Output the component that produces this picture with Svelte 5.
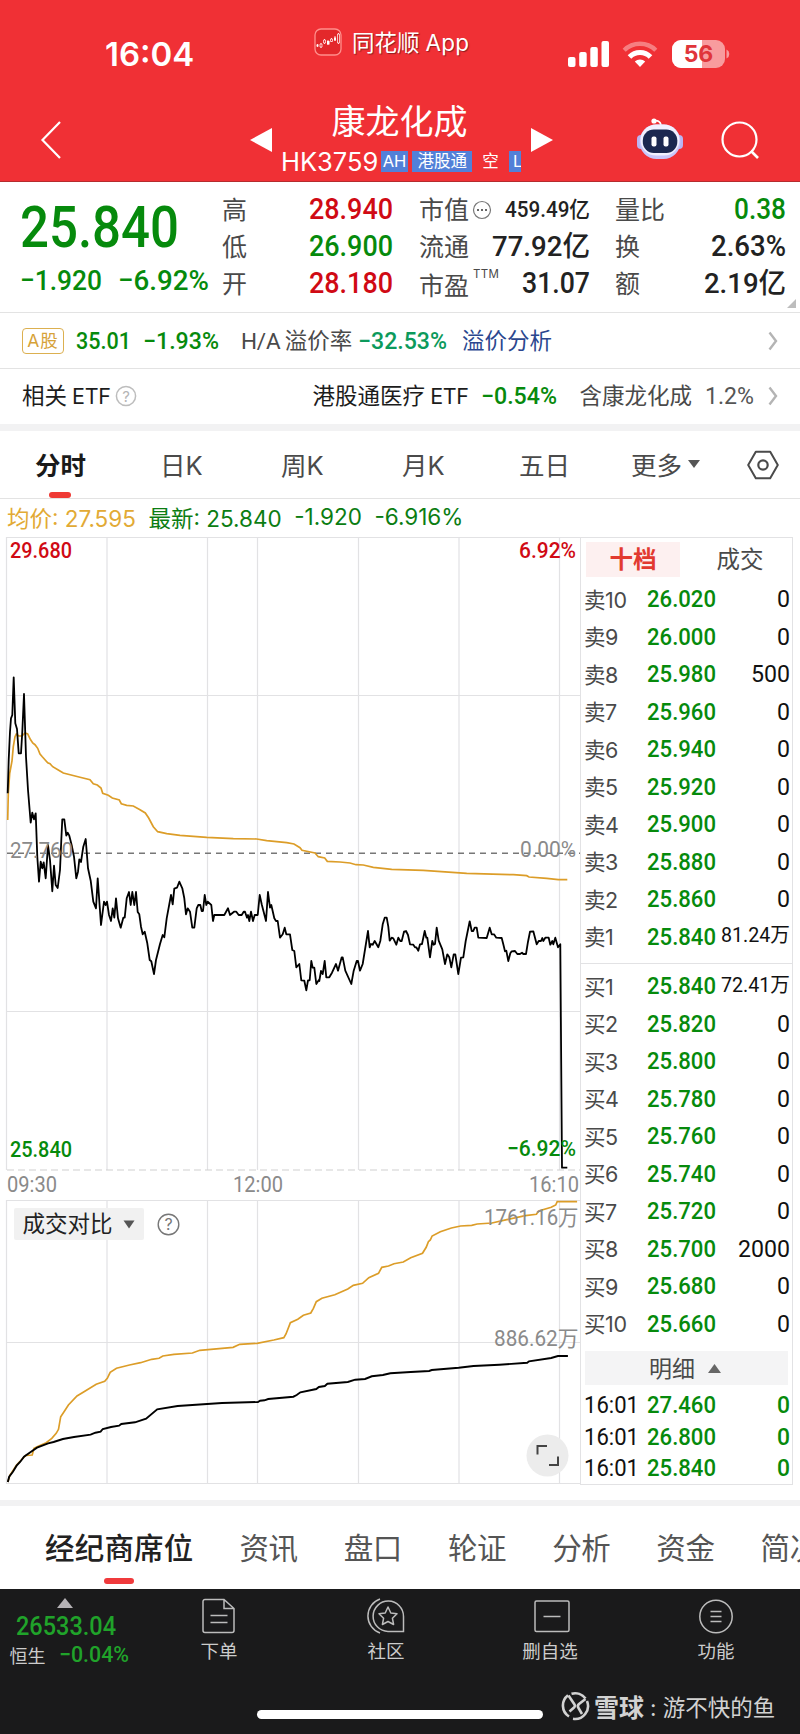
<script lang="ts">
  interface Level {
    label: string;
    price: string;
    qty: string;
  }

  const sellPrices = ['26.020', '26.000', '25.980', '25.960', '25.940', '25.920', '25.900', '25.880', '25.860', '25.840'];
  const buyPrices = ['25.840', '25.820', '25.800', '25.780', '25.760', '25.740', '25.720', '25.700', '25.680', '25.660'];
  const sellQty: Record<number, string> = { 8: '500', 1: '81.24万' };
  const buyQty: Record<number, string> = { 1: '72.41万', 8: '2000' };

  const sells: Level[] = sellPrices.map((price, i) => ({
    label: `卖${10 - i}`,
    price,
    qty: sellQty[10 - i] ?? '0',
  }));
  const buys: Level[] = buyPrices.map((price, i) => ({
    label: `买${i + 1}`,
    price,
    qty: buyQty[i + 1] ?? '0',
  }));

  const trades = ['27.460', '26.800', '25.840'];
  const pages = ['资讯', '盘口', '轮证', '分析', '资金', '简况'];
  const gridX = [107, 207.5, 257.5, 358.5, 459, 559.5];

  // 采样点 -> 折线坐标
  function line(raw: string, ox: number, oy: number, sx: number, sy: number) {
    return raw
      .trim()
      .split(/\s+/)
      .map((p) => {
        const [x, y] = p.split(',').map(Number);
        return `${(ox + x / sx).toFixed(1)},${(oy + y / sy).toFixed(1)}`;
      })
      .join(' ');
  }

  const price =
    line(
      `23,400 26,300 30,215 33,175 37,165 41,52 46,190 51,207 56,280 63,280 67,215 72,102 78,290 84,390 92,488 97,458
      102,478 107,460 112,590 117,665 122,605 127,625 131,607 137,655 144,555 150,600 157,694 162,617 167,675 173,684
      180,630 184,540 187,478 193,478 199,527 203,518 208,527 215,556 222,590 229,655 234,635 238,598 243,606 250,560
      257,537 264,625 272,662 280,725 288,745 293,655 303,795 312,725 317,735 321,725 327,765 333,783 338,745 343,773
      348,715 354,775 362,803 370,773 374,773 380,715 387,696 392,735 397,696 403,735 408,696 413,756 418,763 423,800
      428,823 434,815 442,850 449,900 454,904 462,942 468,900 480,852 488,825 493,832 500,775 513,705 518,733 523,686
      531,683 538,665 547,685 553,715 558,763 563,745 570,755 577,803 583,803 590,745 595,735 601,735 605,753 609,753
      614,705 619,735 623,725 634,735 639,783 643,765 673,765 684,745 690,765 702,755 709,755 716,765 725,765 731,755
      735,755 741,773 744,765 748,783 753,755 759,783 764,765 773,765 779,705 785,733 798,783 804,696 810,743 814,735
      823,775 828,783 833,783`,
      0, 660, 3, 3,
    ) +
    ' ' +
    line(
      `0,353 8,343 14,323 19,343 30,343 37,390 43,393 49,442 58,432 64,481 73,482 79,511 84,481 89,481 94,423 98,443
      103,443 109,492 116,481 118,483 123,453 128,462 134,423 139,472 148,472 156,458 168,432 174,452 185,412 188,412
      196,452 214,492 221,452 230,423 234,423 240,452 248,432 264,333 269,382 273,372 278,374 284,363 295,382 301,363
      308,313 314,293 320,293 325,320 329,362 335,353 340,355 349,374 355,353 361,363 365,363 372,335 378,333 384,345
      390,373 400,374 405,382 409,382 415,392 420,373 426,372 434,333 439,353 442,353 450,412 457,363 461,374 465,372
      470,323 476,362 487,388 495,432 502,403 508,412 514,442 521,403 526,403 535,462 543,413 550,412 557,363 569,304
      575,333 580,333 584,323 590,323 595,353 620,354 629,323 635,343 642,343 649,353 665,354 670,373 675,394 679,392
      685,423 691,400 695,394 705,393 712,402 720,402 726,398 730,402 738,402 744,365 750,335 760,334 770,373 776,363
      783,363 787,354 790,363 796,353 806,353 811,374 817,363 820,373 826,353 834,382 841,373 846,1043 862,1043`,
      280, 820, 3, 3,
    );

  const average =
    line(
      `23,480 25,400 29,340 36,303 40,260 45,230 49,222 56,228 66,228 75,219 83,222 91,238 98,249 105,254 113,265
      120,282 127,290 143,308 150,311 158,320 175,330 190,339 240,352 270,359 280,371 292,375 303,384 308,400 325,406
      337,414 358,420 364,431 380,436 400,438 420,449 436,459 446,474 460,500 473,515 500,521 540,526 620,532 700,536
      770,537 800,542 860,548 882,552 900,563`,
      0, 660, 3, 3,
    ) +
    ' ' +
    line(
      `66,91 105,99 115,110 134,114 142,124 180,126 210,129 228,134 250,135 280,142 335,148 430,151 560,160 700,164
      740,167 747,171 800,175 835,179 862,179`,
      280, 820, 3, 3,
    );

  const volumePrev = line(
    `21,966 27,945 35,932 45,915 60,897 70,886 87,885 92,865 105,858 125,848 140,835 152,820 158,808 164,770 175,752
    185,735 208,708 225,697 260,673 283,664 290,655 298,637 315,625 350,615 380,608 410,598 430,595 440,588 470,583
    520,579 540,571 630,562 648,553 695,550 740,540 767,533 773,522 785,488 805,478 820,466 840,459 847,445 855,425
    870,415 905,404 940,387 955,376 980,370 997,353 1023,340 1032,322 1050,318 1065,311 1090,306 1110,293 1142,280
    1152,262 1158,245 1163,240 1168,228 1190,215 1220,204 1245,198 1275,196 1290,192 1330,189 1370,179 1420,167
    1450,163 1456,153 1490,142 1502,135 1506,125 1560,125`,
    0, 1160, 2.703, 3,
  );

  const volumeToday = line(
    `21,966 25,950 35,935 45,917 55,905 65,890 80,878 100,863 130,850 145,846 170,837 200,831 245,824 258,818 272,815
    278,807 300,801 322,797 328,792 365,787 395,776 425,748 480,738 560,732 600,729 697,726 703,722 715,721 725,717
    793,710 802,705 812,697 855,687 862,681 878,678 885,671 940,666 960,659 987,657 1005,649 1035,645 1055,640
    1110,636 1160,633 1167,630 1240,623 1280,618 1350,614 1425,608 1430,604 1490,594 1508,588 1535,588`,
    0, 1160, 2.703, 3,
  );

  function qtyWidth(qty: string) {
    return qty.includes('万') ? 69 : qty.length * 13;
  }
</script>

<!-- 窄体数字：按给定宽度压缩 -->
{#snippet num(text: string, width: number, size: number, tone: string)}
  <svg class="num {tone}" width={width} height={size}>
    <text x="0" y={size * 0.855} font-size={size} textLength={width} lengthAdjust="spacingAndGlyphs">{text}</text>
  </svg>
{/snippet}

{#snippet chevron()}
  <svg class="chevron" width="10" height="20" viewBox="0 0 10 20">
    <path d="M1.5 1.5L8 10L1.5 18.5" fill="none" stroke="#b4b4b4" stroke-width="2.4" />
  </svg>
{/snippet}

{#snippet level(row: Level)}
  <div class="level">
    <span class="level-name">{row.label}</span>
    {@render num(row.price, 69, 23.5, 'green')}
    <span class="level-qty" class:big={row.qty.includes('万')}>
      {@render num(row.qty, qtyWidth(row.qty), row.qty.includes('万') ? 20.5 : 23.5, 'black')}
    </span>
  </div>
{/snippet}

<div class="app">
  <header class="header">
    <div class="status">
      <span class="clock">16:04</span>
      <div class="source">
        <svg width="28" height="28" viewBox="0 0 28 28">
          <rect x="1" y="1" width="26" height="26" rx="6" fill="#e3282b" stroke="#ff8f8c" stroke-width="1.3" />
          <path d="M3.5 16v3M7 15v5M10.500 11v5M14 12v5M17.500 10v4M21 8v5M24.500 5v11" stroke="#ffd5d0" stroke-width="1" />
          <path d="M2.500 16.500h2v2h-2zM13 13h2.500v3.500H13zM20 9.500h2v3h-2z" fill="#fff" />
          <path d="M6 16h2v3H6zM9.500 12h2v3h-2zM16.500 11h2v2.500h-2zM23.500 6h2v9h-2z" fill="#e3282b" stroke="#fff" stroke-width=".7" />
        </svg>
        <span>同花顺<i>App</i></span>
      </div>
      <div class="signals">
        <svg width="42" height="26" viewBox="0 0 42 26">
          <rect x="0" y="16" width="7.500" height="10" rx="2" />
          <rect x="11.200" y="11" width="7.500" height="15" rx="2" />
          <rect x="22.300" y="6" width="7.500" height="20" rx="2" />
          <rect x="33.500" y="0" width="7.500" height="26" rx="2" />
        </svg>
        <svg width="36" height="26" viewBox="0 0 36 26">
          <path d="M2.200 9.200a22.500 22.500 0 0 1 31.600 0" fill="none" stroke="#fff" stroke-opacity=".38" stroke-width="4.400" />
          <path d="M7.500 16a14.600 14.600 0 0 1 21 0" fill="none" stroke="#fff" stroke-width="5" />
          <path d="M18 26l-5.200-5.400a7.400 7.400 0 0 1 10.400 0z" />
        </svg>
        <svg class="battery" width="59" height="28" viewBox="0 0 59 28">
          <path d="M9 0h35a9 9 0 0 1 9 9v10a9 9 0 0 1-9 9H9a9 9 0 0 1-9-9V9a9 9 0 0 1 9-9z" opacity=".52" />
          <path d="M9 0h21v28H9a9 9 0 0 1-9-9V9a9 9 0 0 1 9-9z" />
          <path d="M54.500 9.500a5 5 0 0 1 0 9z" opacity=".52" />
          <text x="26.500" y="22" text-anchor="middle">56</text>
        </svg>
      </div>
    </div>
    <div class="nav">
      <svg class="back" width="24" height="40" viewBox="0 0 24 40">
        <path d="M21 2L3.500 20L21 38" fill="none" stroke="#fff" stroke-width="2.200" />
      </svg>
      <svg class="prev" width="22" height="24" viewBox="0 0 22 24"><path d="M0 12L22 0v24z" fill="#fff" /></svg>
      <div class="title">
        <h1>康龙化成</h1>
        <div class="code">
          <span class="code-text">HK3759</span>
          <b class="tag ah">AH</b>
          <b class="tag connect">港股通</b>
          <b class="tag short">空</b>
          <b class="tag last">L</b>
        </div>
      </div>
      <svg class="next" width="22" height="24" viewBox="0 0 22 24"><path d="M22 12L0 0v24z" fill="#fff" /></svg>
      <svg class="robot" width="46" height="42" viewBox="0 0 46 42">
        <rect x="0" y="17" width="9" height="14" rx="4" fill="#b9b4f2" />
        <rect x="37" y="17" width="9" height="14" rx="4" fill="#b9b4f2" />
        <path d="M16 3Q23 1.500 24 7" fill="none" stroke="#fff" stroke-width="1.800" />
        <circle cx="17" cy="3" r="2.600" fill="#fff" />
        <rect x="2.500" y="6.500" width="41" height="34.500" rx="17" fill="#c9c6fa" />
        <rect x="3.500" y="6.500" width="39" height="31" rx="15.500" fill="#f1f0ff" />
        <rect x="5.800" y="11.500" width="34.500" height="23.500" rx="11" fill="#1c2850" />
        <rect x="14.500" y="18.500" width="5" height="10" rx="2" fill="#fff" />
        <rect x="26.500" y="18.500" width="5" height="10" rx="2" fill="#fff" />
      </svg>
      <svg width="38" height="38" viewBox="0 0 38 38">
        <circle cx="18.500" cy="18.500" r="17" fill="none" stroke="#fff" stroke-width="2.200" />
        <path d="M30 30L37 37" stroke="#fff" stroke-width="2.600" />
      </svg>
    </div>
  </header>

  <section class="quote">
    <div class="last-price">
      {@render num('25.840', 159, 58, 'green')}
      <div class="change">
        {@render num('−1.920', 82, 28.5, 'green')}
        {@render num('−6.92%', 91, 28.5, 'green')}
      </div>
    </div>
    <dl class="stats first">
      <div><dt>高</dt><dd>{@render num('28.940', 84, 29.5, 'red')}</dd></div>
      <div><dt>低</dt><dd>{@render num('26.900', 84, 29.5, 'green')}</dd></div>
      <div><dt>开</dt><dd>{@render num('28.180', 84, 29.5, 'red')}</dd></div>
    </dl>
    <dl class="stats second">
      <div>
        <dt>
          市值
          <svg class="dots" width="20" height="20" viewBox="0 0 20 20">
            <circle cx="10" cy="10" r="8.500" fill="none" stroke="#777" stroke-width="1.200" />
            <path d="M5 10h2M9 10h2M13 10h2" stroke="#666" stroke-width="1.800" />
          </svg>
        </dt>
        <dd>{@render num('459.49亿', 85, 22, 'dark')}</dd>
      </div>
      <div><dt>流通</dt><dd>{@render num('77.92亿', 98, 28.5, 'dark')}</dd></div>
      <div><dt class="pe">市盈<sup>TTM</sup></dt><dd>{@render num('31.07', 68, 29.5, 'dark')}</dd></div>
    </dl>
    <dl class="stats third">
      <div><dt>量比</dt><dd>{@render num('0.38', 52, 29.5, 'green')}</dd></div>
      <div><dt>换</dt><dd>{@render num('2.63%', 75, 29.5, 'dark')}</dd></div>
      <div><dt>额</dt><dd>{@render num('2.19亿', 82, 28.5, 'dark')}</dd></div>
    </dl>
    <svg class="corner" width="9" height="9" viewBox="0 0 9 9"><path d="M9 0v9H0z" fill="#bdbdbd" /></svg>
  </section>

  <section class="strip">
    <span class="a-tag">A股</span>
    {@render num('35.01', 55, 23.5, 'green ml12')}
    {@render num('−1.93%', 76, 23.5, 'green ml12')}
    <span class="premium"><i>H/A</i> 溢价率</span>
    {@render num('−32.53%', 89, 23.5, 'teal ml8')}
    <a class="link" href="#premium">溢价分析</a>
    {@render chevron()}
  </section>

  <section class="strip etf">
    <span class="etf-title">相关<i>ETF</i></span>
    <svg class="help" width="22" height="22" viewBox="0 0 22 22">
      <circle cx="11" cy="11" r="9.600" fill="none" stroke="#bdbdbd" stroke-width="1.500" />
      <text x="11" y="16.500" text-anchor="middle" font-size="15" fill="#b5b5b5">?</text>
    </svg>
    <span class="etf-name">港股通医疗<i>ETF</i></span>
    {@render num('−0.54%', 76, 23.5, 'green ml11')}
    <span class="etf-in">含康龙化成</span>
    {@render num('1.2%', 49, 23.5, 'muted ml13')}
    {@render chevron()}
  </section>

  <nav class="periods">
    <span class="active">分时</span>
    <span>日K</span>
    <span>周K</span>
    <span>月K</span>
    <span>五日</span>
    <span class="more">
      更多
      <svg width="12" height="8" viewBox="0 0 12 8"><path d="M0 0h12L6 8z" fill="#555" /></svg>
    </span>
    <svg class="settings" width="32" height="30" viewBox="0 0 32 30">
      <path d="M8.800 1.800h14.400L30.800 15L23.200 28.200H8.800L1.200 15z" fill="none" stroke="#4a4a4a" stroke-width="2" stroke-linejoin="round" />
      <circle cx="16" cy="15" r="4.700" fill="none" stroke="#4a4a4a" stroke-width="2.200" />
    </svg>
  </nav>

  <div class="summary">
    <span class="avg">均价: <i>27.595</i></span>
    <span>最新: <i>25.840</i></span>
    <i>-1.920</i>
    <i>-6.916%</i>
  </div>

  <main class="board">
    <svg class="chart" width="580" height="949" viewBox="0 536 580 949">
      <g class="grid">
        <path d="M6.500 537.500H580M6.500 695.500H580M6.500 1011.500H580M6.500 537V1170M6.500 1200.500H580M6.500 1342.500H580M6.500 1483.500H580M6.500 1200V1484" />
        {#each gridX as x}
          <path d="M{x} 537V1170M{x} 1200V1484" />
        {/each}
      </g>
      <path d="M7 1170H580" stroke="#cfcfcf" stroke-width="1.200" stroke-dasharray="7 4" />
      <path d="M7 853.300H580" stroke="#777" stroke-width="1.400" stroke-dasharray="6 5" />

      <polyline points={average} fill="none" stroke="#dc9d28" stroke-width="1.700" />
      <polyline points={price} fill="none" stroke="#000" stroke-width="1.800" stroke-linejoin="round" />
      <polyline points={volumePrev} fill="none" stroke="#dc9d28" stroke-width="1.700" />
      <polyline points={volumeToday} fill="none" stroke="#000" stroke-width="1.900" />

      <g class="labels" font-size="22">
        <text class="red" x="10" y="558" textLength="62" lengthAdjust="spacingAndGlyphs">29.680</text>
        <text class="red" x="519" y="558" textLength="57" lengthAdjust="spacingAndGlyphs">6.92%</text>
        <text class="gray" x="10" y="858" textLength="63" lengthAdjust="spacingAndGlyphs">27.760</text>
        <text class="gray" x="520" y="857" textLength="56" lengthAdjust="spacingAndGlyphs">0.00%</text>
        <text class="green" x="10" y="1157" textLength="62" lengthAdjust="spacingAndGlyphs">25.840</text>
        <text class="green" x="507" y="1156" textLength="69" lengthAdjust="spacingAndGlyphs">−6.92%</text>
        <text class="gray" x="7" y="1192" textLength="50" lengthAdjust="spacingAndGlyphs">09:30</text>
        <text class="gray" x="233" y="1192" textLength="50" lengthAdjust="spacingAndGlyphs">12:00</text>
        <text class="gray" x="529" y="1192" textLength="50" lengthAdjust="spacingAndGlyphs">16:10</text>
        <text class="gray" x="484" y="1225" textLength="94.500" lengthAdjust="spacingAndGlyphs">1761.16万</text>
        <text class="gray" x="494" y="1346" textLength="84.500" lengthAdjust="spacingAndGlyphs">886.62万</text>
      </g>

      <rect x="14" y="1208" width="130" height="32" rx="2" fill="#f1f1f1" />
      <text class="cjk" x="22.500" y="1232" font-size="22.500" fill="#222">成交对比</text>
      <path d="M123.500 1220.500h11l-5.500 8z" fill="#555" />
      <circle cx="168.500" cy="1224.500" r="10.300" fill="none" stroke="#777" stroke-width="1.400" />
      <text class="cjk" x="168.500" y="1230" text-anchor="middle" font-size="16" fill="#777">?</text>

      <circle cx="547.500" cy="1455.500" r="21" fill="#ececec" />
      <path d="M537.500 1454.500V1446H547M558 1456.500V1465H549" fill="none" stroke="#444" stroke-width="2" />
    </svg>

    <aside class="book">
      <div class="book-tabs">
        <span class="on">十档</span>
        <span>成交</span>
      </div>
      <div class="levels">
        {#each sells as row}
          {@render level(row)}
        {/each}
      </div>
      <div class="levels buy">
        {#each buys as row}
          {@render level(row)}
        {/each}
      </div>
      <div class="detail-bar">
        <span>明细</span>
        <svg width="13" height="9" viewBox="0 0 13 9"><path d="M0 9h13L6.500 0z" fill="#666" /></svg>
      </div>
      {#each trades as trade}
        <div class="trade">
          {@render num('16:01', 55, 23.5, 'black')}
          {@render num(trade, 69, 23.5, 'green')}
          <span class="level-qty">{@render num('0', 13, 23.5, 'green')}</span>
        </div>
      {/each}
    </aside>
  </main>

  <nav class="pages">
    <span class="active">经纪商席位</span>
    {#each pages as page}
      <span>{page}</span>
    {/each}
  </nav>

  <footer class="footer">
    <div class="toolbar">
      <div class="index">
        <svg width="16" height="10" viewBox="0 0 16 10"><path d="M8 0l8 10H0z" fill="#b5b2b5" /></svg>
        {@render num('26533.04', 100, 26, 'lime')}
        <div class="index-row">
          <span>恒生</span>
          {@render num('−0.04%', 70, 22, 'lime')}
        </div>
      </div>
      <div class="tool order">
        <svg width="36" height="36" viewBox="0 0 36 36">
          <path d="M23 1.500H4a2 2 0 0 0-2 2v29a2 2 0 0 0 2 2h27a2 2 0 0 0 2-2V10.500zM23 1.500v9h9.500M9.500 17.500h17M9.500 24.500h17" />
        </svg>
        <span>下单</span>
      </div>
      <div class="tool community">
        <svg width="40" height="36" viewBox="0 0 40 36">
          <path d="M14 1A18 18 0 0 0 14 35M37.500 33.500H22A15.200 15.200 0 1 1 37.500 18.500z" />
          <path d="M22 9l2.800 6 6.200.8-4.600 4.400 1.200 6.300-5.600-3-5.600 3 1.200-6.300L13 15.800l6.200-.8z" stroke-linejoin="round" />
        </svg>
        <span>社区</span>
      </div>
      <div class="tool remove">
        <svg width="36" height="36" viewBox="0 0 36 36">
          <rect x="1" y="3" width="34" height="30.500" rx="1.500" />
          <path d="M9.500 18.500h17" />
        </svg>
        <span>删自选</span>
      </div>
      <div class="tool menu">
        <svg width="36" height="36" viewBox="0 0 36 36">
          <circle cx="18" cy="18.500" r="16.200" />
          <path d="M12.500 13.500h11M12.500 18.500h11M12.500 23.500h11" />
        </svg>
        <span>功能</span>
      </div>
    </div>
    <div class="bottom">
      <div class="home"></div>
      <div class="credit">
        <svg width="30" height="30" viewBox="0 0 30 30">
          <g fill="none" stroke="#d2d2d2" stroke-width="2.600">
            <path d="M9 25.500A13 13 0 0 1 8 4.200M11.500 2.700A13 13 0 0 1 25.500 7.500M27 10A13 13 0 0 1 13 27.800" />
            <path d="M8.500 4.500L14.500 13.500Q15.500 15 14 16.500L9.500 20.500M25.500 8L19 13Q17 14.800 18.500 17L22 23" />
          </g>
        </svg>
        <b>雪球</b><span>: 游不快的鱼</span>
      </div>
    </div>
  </footer>
</div>

<style>
  :global(body) {
    margin: 0;
    background: #fff;
  }

  .app {
    width: 800px;
    height: 1734px;
    overflow: hidden;
    background: #fff;
    color: #4a4a4a;
    font-family: Inter, 'Noto Sans CJK SC', sans-serif;
    white-space: nowrap;
  }

  i {
    font-style: normal;
  }

  svg {
    flex-shrink: 0;
    display: block;
  }

  .num {
    overflow: visible;
    font-family: Roboto, 'Noto Sans CJK SC', sans-serif;
    font-weight: 500;
  }

  .green { fill: #068a0c; }
  .red { fill: #d00a14; }
  .dark { fill: #222; }
  .black { fill: #111; font-weight: 400; }
  .teal { fill: #0c9a5c; }
  .muted { fill: #555; font-weight: 400; }
  .gray { fill: #8a8a8a; }
  .lime { fill: #20a32a; }
  .ml8 { margin-left: 8px; }
  .ml11 { margin-left: 11px; }
  .ml12 { margin-left: 12px; }
  .ml13 { margin-left: 13px; }

  .header {
    box-sizing: border-box;
    height: 182px;
    background: #f03035;
    border-bottom: 1px solid #b52c2e;
    color: #fff;
  }

  .status {
    display: flex;
    height: 92px;
  }

  .clock {
    width: 209px;
    padding: 34px 0 0 105px;
    box-sizing: border-box;
    font-size: 33px;
    line-height: 41px;
    font-weight: 600;
  }

  .source {
    display: flex;
    align-items: center;
    gap: 10px;
    height: 28px;
    margin: 28px 0 0 105px;
    font-size: 22.5px;
    text-shadow: 1px 1px 1px #8d1d20;
  }

  .source span {
    margin-bottom: 3px;
  }

  .source i {
    margin-left: 6px;
    letter-spacing: 0.2px;
  }

  .signals {
    display: flex;
    align-items: flex-start;
    gap: 12px;
    margin: 41px 0 0 auto;
    padding-right: 69px;
    fill: #fff;
  }

  .battery {
    margin: -1px 0 0 2px;
  }

  .battery text {
    fill: #e0353a;
    font-size: 23px;
    font-weight: 700;
  }

  .nav {
    display: flex;
    align-items: center;
    height: 89px;
    padding: 6px 0 0 39px;
    box-sizing: border-box;
  }

  .prev {
    margin-left: 187px;
  }

  .title {
    display: flex;
    flex-direction: column;
    align-items: center;
    width: 240px;
    margin: 0 10px 0 9px;
  }

  h1 {
    margin: -1px 3px 0 0;
    font-size: 34px;
    line-height: 42px;
    font-weight: 400;
  }

  .code {
    display: flex;
    align-items: center;
    width: 240px;
    height: 34px;
    padding-top: 2px;
    margin-bottom: -1px;
    overflow: hidden;
  }

  .code-text {
    width: 100px;
    font-size: 25.5px;
  }

  .tag {
    box-sizing: border-box;
    height: 21px;
    background: #5280d8;
    font-size: 16.5px;
    line-height: 20px;
    font-weight: 400;
    text-align: center;
  }

  .ah { width: 28px; }
  .connect { width: 60px; margin-left: 4px; }
  .short { width: 29px; margin-left: 4px; background: none; }
  .last { width: 12px; margin-left: 4px; padding-left: 4px; text-align: left; }

  .robot {
    margin: -2px 38px 0 84px;
  }

  .quote {
    position: relative;
    display: flex;
    box-sizing: border-box;
    height: 131px;
    padding-left: 20px;
    border-bottom: 1px solid #e3e3e3;
  }

  .last-price {
    width: 202px;
    padding-top: 15px;
    box-sizing: border-box;
  }

  .change {
    display: flex;
    gap: 16px;
    margin-top: 11px;
  }

  .stats {
    margin: 8.5px 0 0;
  }

  .stats div {
    display: flex;
    align-items: center;
    justify-content: space-between;
    height: 37px;
  }

  .first { width: 171px; }
  .second { width: 171px; margin-left: 26px; }
  .third { width: 171px; margin-left: 25px; }

  dt {
    display: flex;
    align-items: center;
    font-size: 25px;
    line-height: 36px;
    padding-top: 1px;
  }

  dd {
    margin: 0;
  }

  .dots {
    margin-left: 3px;
  }

  .pe {
    padding-top: 5px;
  }

  sup {
    margin: -24px 0 0 4px;
    font-size: 11.5px;
    line-height: 12px;
    letter-spacing: 0.3px;
  }

  .corner {
    position: absolute;
    right: 4px;
    bottom: 4px;
  }

  .strip {
    display: flex;
    align-items: center;
    box-sizing: border-box;
    height: 56px;
    padding: 0 22px 0 22px;
    border-bottom: 1px solid #e3e3e3;
    font-size: 22.5px;
  }

  .a-tag {
    width: 42px;
    height: 26px;
    box-sizing: border-box;
    border: 1px solid #dcb050;
    border-radius: 4px;
    color: #d6a238;
    font-size: 17.5px;
    line-height: 23px;
    letter-spacing: 1px;
    text-align: center;
  }

  .premium,
  .link {
    margin-bottom: 3px;
  }

  .premium {
    width: 109px;
    margin-left: 22px;
    word-spacing: -2px;
  }

  .premium i {
    font-family: Roboto, sans-serif;
    letter-spacing: -0.2px;
  }

  .link {
    margin-left: 15px;
    color: #2b478f;
    text-decoration: none;
  }

  .chevron {
    margin-left: auto;
  }

  .etf {
    height: 62px;
    padding-bottom: 2px;
    border-bottom: 7px solid #f2f2f3;
  }

  .etf span {
    margin-bottom: 3px;
  }

  .etf-title,
  .etf-name {
    color: #1c1c1c;
  }

  .etf-title i,
  .etf-name i {
    margin-left: 5px;
    font-size: 21.5px;
    letter-spacing: -0.3px;
  }

  .help {
    margin-left: 4px;
  }

  .etf .etf-name {
    width: 157px;
    margin-left: 176px;
  }

  .etf .etf-in {
    margin-left: 23px;
  }

  .periods {
    display: flex;
    align-items: center;
    box-sizing: border-box;
    height: 68px;
    padding: 0 0 0 35px;
    border-bottom: 1px solid #e3e3e3;
    font-size: 25.5px;
  }

  .periods span {
    position: relative;
    width: 121px;
    margin-bottom: 3px;
  }

  .periods .active {
    width: 125px;
    color: #1a1a1a;
    font-weight: 700;
  }

  .periods .active::after {
    content: '';
    position: absolute;
    left: 14px;
    bottom: -16px;
    width: 22px;
    height: 6px;
    border-radius: 3px;
    background: #ef3a35;
  }

  .periods span:nth-child(4) { width: 117px; }
  .periods span:nth-child(5) { width: 112px; }

  .periods .more {
    display: flex;
    align-items: center;
    gap: 6px;
    width: 116px;
  }

  .more svg {
    margin-top: 2px;
  }

  .summary {
    display: flex;
    align-items: center;
    box-sizing: border-box;
    height: 37px;
    padding: 0 0 2px 7px;
    gap: 12.5px;
    font-size: 22.5px;
    color: #0b7d12;
  }

  .avg {
    color: #e2aa35;
  }

  .board {
    display: flex;
    height: 949px;
  }

  .chart {
    overflow: visible;
  }

  .grid path {
    stroke: #e2e2e4;
    stroke-width: 1.2;
    fill: none;
  }

  .labels {
    font-family: Roboto, 'Noto Sans CJK SC', sans-serif;
  }

  .labels .red,
  .labels .green {
    font-weight: 500;
  }

  .cjk {
    font-family: Inter, 'Noto Sans CJK SC', sans-serif;
  }

  .book {
    box-sizing: border-box;
    width: 213px;
    height: 948px;
    margin-top: 1px;
    border: 1px solid #e2e2e4;
  }

  .book-tabs {
    display: flex;
    margin: 4px 0 3px 5px;
    font-size: 23.5px;
    line-height: 35px;
    text-align: center;
  }

  .book-tabs span {
    width: 94px;
  }

  .book-tabs span + span {
    margin-left: 13px;
  }

  .book-tabs .on {
    background: #fdf0f0;
    color: #e23a30;
    font-weight: 700;
  }

  .levels {
    height: 383px;
  }

  .buy {
    box-sizing: border-box;
    height: 387px;
    padding-top: 3px;
    border-top: 1px solid #e2e2e4;
  }

  .level,
  .trade {
    display: flex;
    align-items: center;
    height: 37.5px;
    padding: 0 2px 0 3px;
  }

  .level-name {
    width: 63px;
    margin-bottom: 1px;
    font-size: 21.5px;
    letter-spacing: -0.4px;
  }

  .level-qty {
    margin-left: auto;
  }

  .big {
    margin-bottom: 4px;
  }

  .detail-bar {
    display: flex;
    align-items: center;
    justify-content: center;
    gap: 13px;
    height: 34px;
    margin: 1px 4px 4px;
    background: #f4f4f5;
    font-size: 23px;
  }

  .detail-bar span {
    margin: 0 0 2px -3px;
  }

  .trade {
    height: 31.7px;
    gap: 8px;
  }

  .pages {
    display: flex;
    box-sizing: border-box;
    height: 104px;
    padding: 22px 0 0 45px;
    gap: 46px;
    background: linear-gradient(#fff 15px, #f2f2f3 15px, #f2f2f3 21px, #fff 21px);
    font-size: 29.5px;
    line-height: 82px;
    color: #555;
  }

  .pages span {
    flex-shrink: 0;
    letter-spacing: -0.4px;
  }

  .pages .active {
    position: relative;
    color: #222;
    font-weight: 500;
    letter-spacing: 0.2px;
  }

  .pages .active::after {
    content: '';
    position: absolute;
    left: 59px;
    bottom: 5px;
    width: 30px;
    height: 6px;
    border-radius: 3px;
    background: #f03a3c;
  }

  .footer {
    height: 145px;
    background: #1a1a1b;
    color: #ccc;
  }

  .toolbar {
    display: flex;
    height: 100px;
  }

  .index {
    display: flex;
    flex-direction: column;
    align-items: center;
    width: 130px;
    padding-top: 9px;
  }

  .index .num {
    margin: 5px 0 0 1px;
  }

  .index-row {
    display: flex;
    align-items: center;
    gap: 13px;
    height: 32px;
    margin-left: 8px;
    font-size: 18px;
  }

  .index .index-row .num {
    margin: -3px 0 0;
  }

  .tool {
    display: flex;
    flex-direction: column;
    align-items: center;
    width: 60px;
    padding-top: 9px;
    font-size: 18.5px;
    line-height: 34px;
  }

  .tool svg {
    fill: none;
    stroke: #bcbcbc;
    stroke-width: 1.5;
  }

  .order { margin-left: 59px; }
  .community { margin-left: 107px; }
  .remove { margin-left: 104px; }
  .remove svg { margin-left: 4px; }
  .menu { margin-left: 106px; }

  .bottom {
    display: flex;
    align-items: center;
    height: 36px;
  }

  .home {
    width: 286px;
    height: 9px;
    margin: 15px 0 0 257px;
    border-radius: 5px;
    background: #fff;
  }

  .credit {
    display: flex;
    align-items: center;
    margin: 0 0 2px 17px;
    font-size: 22.5px;
    color: #d2d2d2;
  }

  .credit b {
    margin: 0 6px 0 4px;
    font-size: 25px;
    font-weight: 700;
  }
</style>
